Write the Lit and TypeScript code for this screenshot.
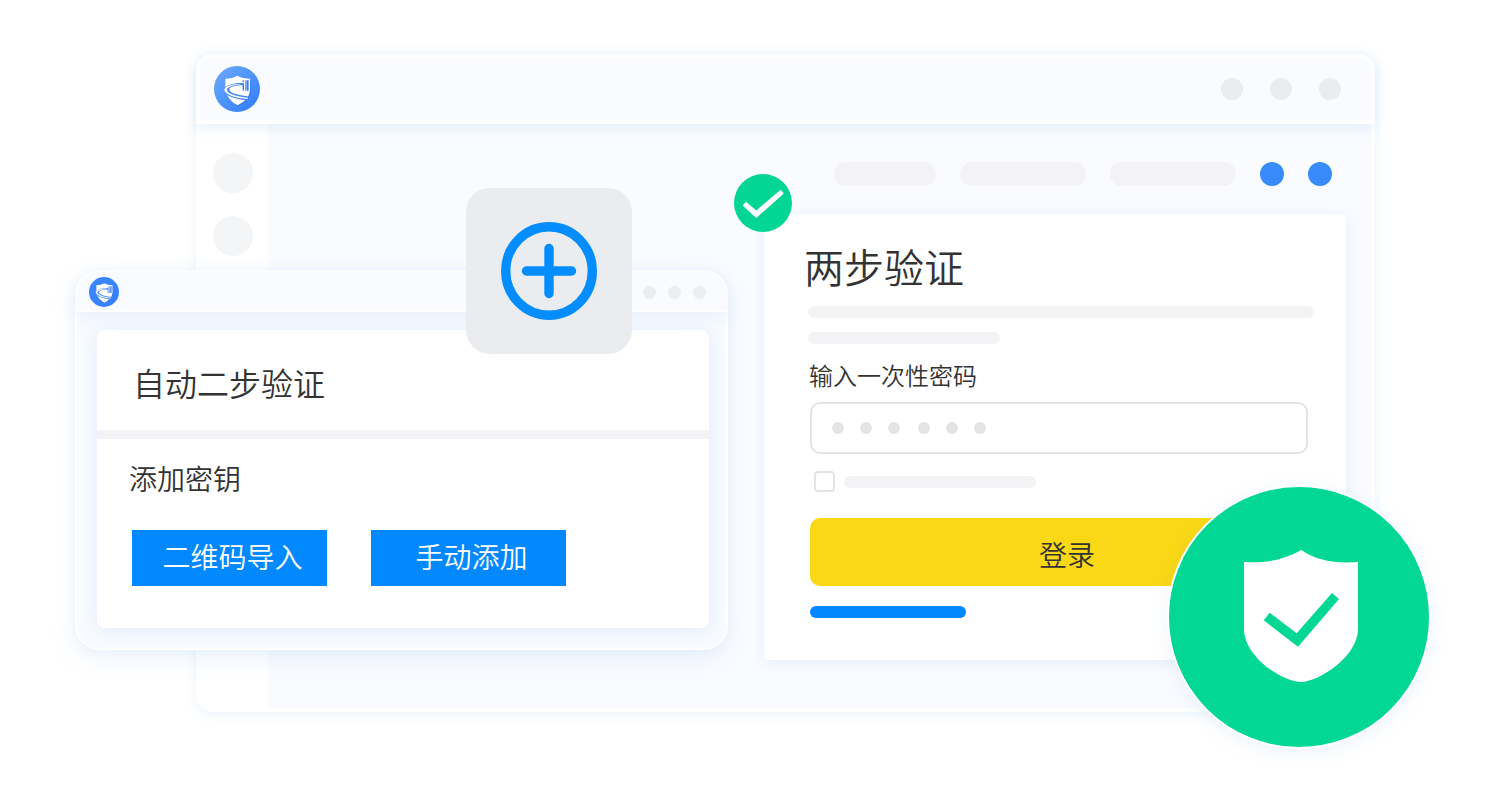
import { LitElement, html, css } from "lit";
import { customElement, property } from "lit/decorators.js";

@customElement("shield-logo")
class ShieldLogo extends LitElement {
  @property() tone = "soft";

  static styles = css`
    :host { display: block; }
    svg { display: block; width: 100%; height: 100%; }
  `;

  render() {
    const start = this.tone === "soft" ? "#68a5fb" : "#3b87ff";
    return html`
      <svg viewBox="0 0 138 138" role="img" aria-label="logo">
        <defs>
          <linearGradient id="g" x1="0.1" y1="0.1" x2="0.9" y2="0.9">
            <stop offset="0" stop-color=${start} />
            <stop offset="1" stop-color="#3580ff" />
          </linearGradient>
          <clipPath id="s">
            <path d="M34 38Q56 38 70 29Q86 38 108 38V74Q105 101 71 118Q43 104 34 74Z" />
          </clipPath>
        </defs>
        <circle cx="69" cy="69" r="69" fill="url(#g)" />
        <path d="M37 42Q58 42 72 33Q88 42 111 42V76Q108 104 74 121Q45 106 37 78Z" fill="#2c6be0" opacity="0.5" />
        <path d="M34 38Q56 38 70 29Q86 38 108 38V74Q105 101 71 118Q43 104 34 74Z" fill="#fff" />
        <path
          clip-path="url(#s)"
          d="M88 51C62 49 38 57 30 68V80C46 94 74 102 112 104V92C78 90 46 82 46 70C47 62 66 58 88 58Z"
          fill="#4388f8"
        />
        <path
          d="M80 53C52 53 31 63 31 71C32 84 66 98 102 98V95C68 92 39 82 39 71C40 63 58 57 80 55Z"
          fill="#fff"
        />
        <path d="M86 43h4v5h-4zM86 52h4v22h-4zM94 43h4v31h-4zM99 43h5v31h-5z" fill="#3d80f2" />
      </svg>
    `;
  }
}

@customElement("add-key-window")
class AddKeyWindow extends LitElement {
  static styles = css`
    :host {
      display: block;
      box-sizing: border-box;
      border: 2px solid #fff;
      border-radius: 24px;
      background: #f8fbff;
      box-shadow: 0 8px 24px rgba(120, 170, 225, 0.14), 0 0 10px rgba(150, 200, 240, 0.1);
      color: #333;
    }
    .bar {
      display: flex;
      align-items: center;
      justify-content: space-between;
      box-sizing: border-box;
      height: 40px;
      padding: 2px 20px 0 12px;
      border-bottom: 2px solid #fff;
      border-radius: 22px 22px 0 0;
      background: #f9fbff;
      box-shadow: 0 6px 14px rgba(140, 175, 235, 0.12);
    }
    .logo { width: 30px; height: 30px; }
    .dots { display: flex; gap: 12px; }
    .dots i { width: 13px; height: 13px; border-radius: 50%; background: #ecedf1; }
    .panel {
      margin: 18px 17px 20px 20px;
      border-radius: 8px;
      background: #fff;
      box-shadow: 0 2px 18px rgba(120, 165, 235, 0.18);
    }
    h2 {
      margin: 0;
      padding: 28px 36px 24px;
      font-size: 32px;
      line-height: 48px;
      font-weight: 350;
      border-bottom: 9px solid #f3f3f5;
    }
    .keys { padding: 19px 32px 42px; }
    h3 { margin: 0 0 32px; font-size: 28px; line-height: 40px; font-weight: 350; }
    .actions { display: flex; gap: 44px; padding-left: 3px; }
    button {
      width: 195px;
      height: 56px;
      padding: 0 0 4px 6px;
      border: 0;
      background: #0288ff;
      color: #fff;
      font: inherit;
      font-size: 28px;
      font-weight: 350;
      line-height: 40px;
    }
    .add {
      position: absolute;
      top: -84px;
      left: 389px;
      display: grid;
      place-items: center;
      width: 166px;
      height: 166px;
      border-radius: 24px;
      background: #ebecf0;
    }
    .add svg { width: 96px; height: 98px; }
  `;

  render() {
    return html`
      <header class="bar">
        <shield-logo class="logo" tone="bold"></shield-logo>
        <div class="dots"><i></i><i></i><i></i></div>
      </header>
      <section class="panel">
        <h2>自动二步验证</h2>
        <div class="keys">
          <h3>添加密钥</h3>
          <div class="actions">
            <button type="button">二维码导入</button>
            <button type="button">手动添加</button>
          </div>
        </div>
      </section>
      <div class="add">
        <svg viewBox="0 0 96 98" fill="none" stroke="#038dff" aria-hidden="true">
          <ellipse cx="48" cy="49" rx="43.3" ry="44.3" stroke-width="9.4" />
          <path d="M48 26.5V71.5M25.5 49H70.5" stroke-width="9.4" stroke-linecap="round" />
        </svg>
      </div>
    `;
  }
}

@customElement("two-step-card")
class TwoStepCard extends LitElement {
  static styles = css`
    :host {
      display: block;
      position: relative;
      box-sizing: border-box;
      padding: 27px 32px 42px 44px;
      border-radius: 4px;
      background: #fff;
      box-shadow: 0 2px 14px rgba(130, 180, 235, 0.18);
      color: #333;
    }
    .badge { position: absolute; top: -40px; left: -30px; width: 58px; height: 58px; }
    h1 { margin: 0 0 15px -4px; font-size: 40px; line-height: 50px; font-weight: 350; }
    .line { height: 12px; border-radius: 6px; background: #f3f3f5; }
    .short { width: 192px; }
    .intro { display: grid; gap: 14px; }
    form { padding-left: 2px; }
    .label {
      display: block;
      margin: 14px 0 10px -1px;
      font-size: 24px;
      line-height: 34px;
    }
    .field { display: grid; align-items: center; margin-right: 6px; }
    .field > * { grid-area: 1 / 1; }
    .field input {
      box-sizing: border-box;
      width: 100%;
      height: 52px;
      padding: 0 20px;
      border: 2px solid #e4e4e4;
      border-radius: 10px;
      background: #fff;
      font: inherit;
      font-size: 24px;
    }
    .pins { display: flex; gap: 18px; padding-left: 22px; pointer-events: none; }
    .pins span { display: flex; gap: 16px; }
    .pins i { width: 12px; height: 12px; border-radius: 50%; background: #e4e4e4; }
    .remember { display: flex; align-items: center; gap: 9px; margin: 17px 0 26px; padding-left: 4px; }
    .remember input {
      appearance: none;
      box-sizing: border-box;
      width: 21px;
      height: 21px;
      margin: 0;
      border: 2px solid #e4e4e4;
      border-radius: 4px;
      background: #fff;
    }
    .login {
      display: block;
      width: calc(100% + 10px);
      height: 68px;
      margin: 0 0 20px;
      padding: 4px 0 0;
      border: 0;
      border-radius: 10px;
      background: #fad815;
      color: #333;
      font: inherit;
      font-size: 28px;
      font-weight: 350;
      line-height: 40px;
    }
    .help { display: block; width: 156px; height: 12px; border-radius: 6px; background: #0288ff; }
  `;

  render() {
    return html`
      <h1>两步验证</h1>
      <div class="intro">
        <div class="line"></div>
        <div class="line short"></div>
      </div>
      <form>
        <label class="label" for="otp">输入一次性密码</label>
        <div class="field">
          <input id="otp" type="password" autocomplete="one-time-code" />
          <div class="pins" aria-hidden="true">
            <span><i></i><i></i><i></i></span>
            <span><i></i><i></i><i></i></span>
          </div>
        </div>
        <label class="remember">
          <input type="checkbox" />
          <span class="line short"></span>
        </label>
        <button class="login" type="button">登录</button>
        <a class="help" href="#"></a>
      </form>
      <svg class="badge" viewBox="0 0 58 58" aria-hidden="true">
        <circle cx="29" cy="29" r="29" fill="#02d594" />
        <path d="M12 27.7L22.3 36.4L46.7 15.7L49.8 19.4L22.3 44L8.6 31.5Z" fill="#fff" />
      </svg>
    `;
  }
}

@customElement("app-root")
class AppRoot extends LitElement {
  static styles = css`
    :host {
      display: block;
      box-sizing: border-box;
      min-height: 100vh;
      padding: 54px 125px 96px 196px;
      background: #fff;
      font-family: "Noto Sans CJK SC", sans-serif;
      font-weight: 350;
    }
    .window {
      position: relative;
      border-radius: 16px;
      background: #fff;
      box-shadow: 0 2px 12px rgba(110, 180, 230, 0.16);
    }
    .bar {
      position: relative;
      display: flex;
      align-items: center;
      justify-content: space-between;
      box-sizing: border-box;
      height: 70px;
      padding: 0 30px 0 14px;
      border: 4px solid #fff;
      border-radius: 16px 16px 0 0;
      background: #fafbff;
      box-shadow: 0 4px 14px rgba(110, 180, 230, 0.18);
    }
    .logo { width: 46px; height: 46px; }
    .dots { display: flex; gap: 27px; }
    .dots i { width: 22px; height: 22px; border-radius: 50%; background: #ebecf0; }
    .body { display: grid; grid-template-columns: 72px 1fr; padding: 0 4px 4px 0; }
    .rail { display: flex; flex-direction: column; gap: 23px; padding: 29px 0 0 17px; }
    .rail i { width: 40px; height: 40px; border-radius: 50%; background: #f4f5f7; }
    .main {
      display: flex;
      flex-direction: column;
      align-items: flex-end;
      padding: 38px 25px 48px 0;
      border-radius: 0 0 8px 0;
      background: #fafbff;
    }
    .tools { display: flex; gap: 24px; padding-right: 14px; margin-bottom: 28px; }
    .tools i { width: 126px; height: 24px; border-radius: 12px; background: #f3f3f5; }
    .tools .narrow { width: 102px; }
    .tools .dot { width: 24px; background: #378bfb; }
    .card { width: 582px; }
    .float { position: absolute; top: 216px; left: -121px; width: 653px; }
    .seal {
      position: absolute;
      right: -56px;
      bottom: -37px;
      width: 260px;
      height: 260px;
      border: 2px solid #fff;
      border-radius: 50%;
      background: #02d794;
      box-shadow: 0 4px 18px rgba(80, 140, 200, 0.1);
    }
    .seal svg { display: block; }
  `;

  render() {
    return html`
      <div class="window">
        <header class="bar">
          <shield-logo class="logo"></shield-logo>
          <div class="dots"><i></i><i></i><i></i></div>
        </header>
        <div class="body">
          <nav class="rail"><i></i><i></i></nav>
          <main class="main">
            <div class="tools">
              <i class="narrow"></i><i></i><i></i><i class="dot"></i><i class="dot"></i>
            </div>
            <two-step-card class="card"></two-step-card>
          </main>
        </div>
        <add-key-window class="float"></add-key-window>
        <div class="seal">
          <svg viewBox="0 0 260 260" aria-hidden="true">
            <path
              d="M132.3 63C148 74 167 76.5 189 75V142C189 170 149 195 132 195C114 195 75 170 75 142V75C97 76.5 114 73 132.3 63Z"
              fill="#fff"
            />
            <path d="M100.7 125.7L127.7 146.3L163 106L170 112L129 159.7L94.7 133.3Z" fill="#02d794" />
          </svg>
        </div>
      </div>
    `;
  }
}
